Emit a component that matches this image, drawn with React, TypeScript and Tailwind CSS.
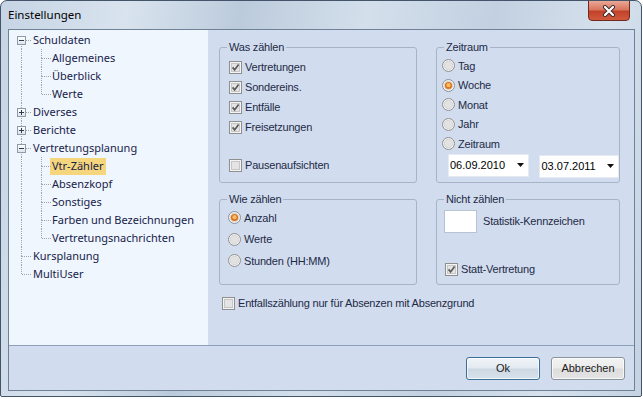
import React from 'react';

const labelFont = { fontFamily: '"Liberation Sans", Arial, sans-serif' };
const uiFont = { fontFamily: '"Noto Sans", "Open Sans", sans-serif' };

const Check: React.FC<{ checked?: boolean }> = ({ checked }) => (
  <svg width="13" height="13" viewBox="0 0 13 13" className="shrink-0">
    <rect x="0.5" y="0.5" width="12" height="12" fill="#f4f4f4" stroke="#8f8f8f" />
    <rect x="2.5" y="2.5" width="8" height="8" fill="#e4e4e4" stroke="#c6c6c6" />
    {checked && (
      <path d="M3.6 6.4 L5.6 8.9 L9.6 3.4" stroke="#5b5b5b" strokeWidth="1.7" fill="none" />
    )}
  </svg>
);

const Radio: React.FC<{ checked?: boolean }> = ({ checked }) => (
  <svg width="13" height="13" viewBox="0 0 13 13" className="shrink-0">
    <circle cx="6.5" cy="6.5" r="6" fill="#f2f2f2" stroke="#8f8f8f" />
    <circle cx="6.5" cy="6.5" r="4.2" fill="#e2e2e2" stroke="#d0d0d0" strokeWidth="0.8" />
    {checked && (
      <>
        <circle cx="6.5" cy="6.5" r="3.6" fill="#d9741c" />
        <circle cx="6.5" cy="6.2" r="2.1" fill="#fbb865" />
      </>
    )}
  </svg>
);

const CheckRow: React.FC<{ label: string; checked?: boolean; className?: string }> = ({ label, checked, className = '' }) => (
  <div className={`flex items-center gap-[3px] h-[20px] ${className}`}>
    <Check checked={checked} />
    <span className="text-[11px] tracking-[-0.2px] text-[#1e2a46]">{label}</span>
  </div>
);

const RadioRow: React.FC<{ label: string; checked?: boolean; h: string }> = ({ label, checked, h }) => (
  <div className={`flex items-center gap-[3px] ${h}`}>
    <Radio checked={checked} />
    <span className="text-[11px] tracking-[-0.2px] text-[#1e2a46]">{label}</span>
  </div>
);

const Group: React.FC<{ title: string; className?: string; children: React.ReactNode }> = ({ title, className = '', children }) => (
  <div className={`relative border border-[#a6b4c6] rounded-[3px] ${className}`}>
    <span className="absolute -top-[8px] left-[7px] px-[2px] bg-[#d1ddee] text-[11px] leading-[14px] tracking-[-0.2px] text-[#1e2a46]">
      {title}
    </span>
    {children}
  </div>
);

const DateBox: React.FC<{ value: string; className?: string }> = ({ value, className = '' }) => (
  <div className={`w-[81px] h-[23px] bg-white border border-[#e6ebf1] flex items-center justify-between pr-[4px] ${className}`}>
    <span className="text-[11px] text-black">{value}</span>
    <svg width="7" height="4" viewBox="0 0 7 4">
      <path d="M0 0 H7 L3.5 4 Z" fill="#111" />
    </svg>
  </div>
);

type Node = {
  label: string;
  level: 0 | 1;
  exp?: 'minus' | 'plus';
  first?: boolean;
  last?: boolean;
  lastChild?: boolean;
  selected?: boolean;
};

const tree: Node[] = [
  { label: 'Schuldaten', level: 0, exp: 'minus', first: true },
  { label: 'Allgemeines', level: 1 },
  { label: 'Überblick', level: 1 },
  { label: 'Werte', level: 1, lastChild: true },
  { label: 'Diverses', level: 0, exp: 'plus' },
  { label: 'Berichte', level: 0, exp: 'plus' },
  { label: 'Vertretungsplanung', level: 0, exp: 'minus' },
  { label: 'Vtr-Zähler', level: 1, selected: true },
  { label: 'Absenzkopf', level: 1 },
  { label: 'Sonstiges', level: 1 },
  { label: 'Farben und Bezeichnungen', level: 1 },
  { label: 'Vertretungsnachrichten', level: 1, lastChild: true },
  { label: 'Kursplanung', level: 0 },
  { label: 'MultiUser', level: 0, last: true },
];

const TreeRow: React.FC<{ n: Node }> = ({ n }) => {
  const dot = 'absolute border-[#a3a3a3] border-dotted';
  return (
    <div className="relative h-[18px] flex items-center">
      {/* level 0 vertical guide */}
      {!n.first && <div className={`${dot} left-[12px] top-0 h-[9px] border-l`} />}
      {!n.last && <div className={`${dot} left-[12px] top-[9px] h-[9px] border-l`} />}
      {n.level === 0 ? (
        <div className={`${dot} left-[13px] top-[9px] w-[9px] border-t`} />
      ) : (
        <>
          <div className={`${dot} left-[32px] top-0 h-[9px] border-l`} />
          {!n.lastChild && <div className={`${dot} left-[32px] top-[9px] h-[9px] border-l`} />}
          <div className={`${dot} left-[33px] top-[9px] w-[9px] border-t`} />
        </>
      )}
      {n.exp && (
        <div className="absolute left-[8px] top-[5px] w-[9px] h-[9px] border border-[#8e9aa8] bg-gradient-to-b from-white to-[#dfe4ea] flex items-center justify-center">
          <div className="relative w-[5px] h-[1px] bg-[#2f3b4f]">
            {n.exp === 'plus' && <div className="absolute left-[2px] -top-[2px] w-[1px] h-[5px] bg-[#2f3b4f]" />}
          </div>
        </div>
      )}
      <span
        className={`${n.level === 0 ? 'ml-[22px]' : 'ml-[41px]'} px-[2px] h-[17px] leading-[16px] text-[11px] text-[#17224a] ${
          n.selected ? 'bg-[#f6d67c]' : ''
        }`}
      >
        {n.label}
      </span>
    </div>
  );
};

const App: React.FC = () => {
  return (
    <div className="w-[643px] h-[399px] bg-white" style={labelFont}>
      <div className="relative w-[642px] h-[397px] rounded-t-[7px] rounded-b-[2px] border border-[#44556b] overflow-hidden bg-[linear-gradient(100deg,#c6d4e4_0%,#d8e3ee_18%,#bccbdc_34%,#d3dfeb_52%,#c2d0e1_70%,#d6e1ec_86%,#c4d2e3_100%)]">
        {/* title bar */}
        <div className="h-[28px] flex items-center pl-[7px]">
          <span className="text-[11.5px] text-black" style={uiFont}>Einstellungen</span>
        </div>
        <div className="absolute left-[587px] -top-[1px] w-[42px] h-[21px] rounded-b-[4px] border border-[#6e2a1e] bg-[linear-gradient(180deg,#eaa897_0%,#d9765f_45%,#c2412a_55%,#d25a3c_100%)] flex items-center justify-center">
          <svg width="14" height="12" viewBox="0 0 14 12">
            <path d="M3 2 L11 10 M11 2 L3 10" stroke="#3c2a2a" strokeWidth="4" strokeLinecap="round" />
            <path d="M3 2 L11 10 M11 2 L3 10" stroke="#ffffff" strokeWidth="2.2" strokeLinecap="round" />
          </svg>
        </div>

        {/* client area */}
        <div className="ml-[7px] w-[627px] h-[362px] border border-[#6f8196] bg-[#d1ddee] flex flex-col">
          <div className="flex h-[316px] border-b border-[#8ca1bb]">
            {/* tree */}
            <div className="w-[199px] bg-[#eff6fd] pt-[1px]" style={uiFont}>
              {tree.map((n) => (
                <TreeRow key={n.label} n={n} />
              ))}
            </div>

            {/* settings */}
            <div className="flex-1 pl-[11px] pt-[17px]">
              <div className="grid grid-cols-[198px_184px] gap-x-[19px] gap-y-[16px]">
                <Group title="Was zählen" className="h-[136px] pl-[9px] pt-[9px]">
                  <CheckRow label="Vertretungen" checked />
                  <CheckRow label="Sondereins." checked />
                  <CheckRow label="Entfälle" checked />
                  <CheckRow label="Freisetzungen" checked />
                  <CheckRow label="Pausenaufsichten" className="mt-[18px]" />
                </Group>

                <Group title="Zeitraum" className="h-[136px] pl-[5px] pt-[8px]">
                  <RadioRow label="Tag" h="h-[19.5px]" />
                  <RadioRow label="Woche" checked h="h-[19.5px]" />
                  <RadioRow label="Monat" h="h-[19.5px]" />
                  <RadioRow label="Jahr" h="h-[19.5px]" />
                  <RadioRow label="Zeitraum" h="h-[19.5px]" />
                  <div className="flex gap-[10px] pl-[6px]">
                    <DateBox value="06.09.2010" className="pl-[1px]" />
                    <DateBox value="03.07.2011" className="pl-[2px] mt-[1px]" />
                  </div>
                </Group>

                <Group title="Wie zählen" className="h-[86px] pl-[8px] pt-[7px]">
                  <RadioRow label="Anzahl" checked h="h-[21.5px]" />
                  <RadioRow label="Werte" h="h-[21.5px]" />
                  <RadioRow label="Stunden (HH:MM)" h="h-[21.5px]" />
                </Group>

                <Group title="Nicht zählen" className="h-[86px] pl-[7px] pt-[10px]">
                  <div className="flex items-center gap-[6px]">
                    <div className="w-[33px] h-[23px] bg-white border border-[#b8c4d2]" />
                    <span className="text-[11px] tracking-[-0.2px] text-[#1e2a46]">Statistik-Kennzeichen</span>
                  </div>
                  <CheckRow label="Statt-Vertretung" checked className="mt-[26px] ml-[1px]" />
                </Group>
              </div>

              <CheckRow label="Entfallszählung nur für Absenzen mit Absenzgrund" className="mt-[8px] ml-[3px]" />
            </div>
          </div>

          {/* buttons */}
          <div className="flex-1 flex items-center justify-end gap-[11px] pr-[9px]">
            <button className="w-[74px] h-[23px] rounded-[3px] border border-[#3c6e9a] bg-[linear-gradient(180deg,#f1f5f9_0%,#e2e9f0_48%,#cdd8e3_52%,#d8e2ec_100%)] text-[11px] font-normal text-[#1b1b1b] shadow-[inset_0_0_0_1px_rgba(255,255,255,0.7)]">
              Ok
            </button>
            <button className="w-[74px] h-[23px] rounded-[3px] border border-[#8a929c] bg-[linear-gradient(180deg,#f3f3f3_0%,#ebebeb_48%,#dddddd_52%,#e4e4e4_100%)] text-[11px] font-normal text-[#1b1b1b] shadow-[inset_0_0_0_1px_rgba(255,255,255,0.7)]">
              Abbrechen
            </button>
          </div>
        </div>
      </div>
    </div>
  );
};

export default App;
